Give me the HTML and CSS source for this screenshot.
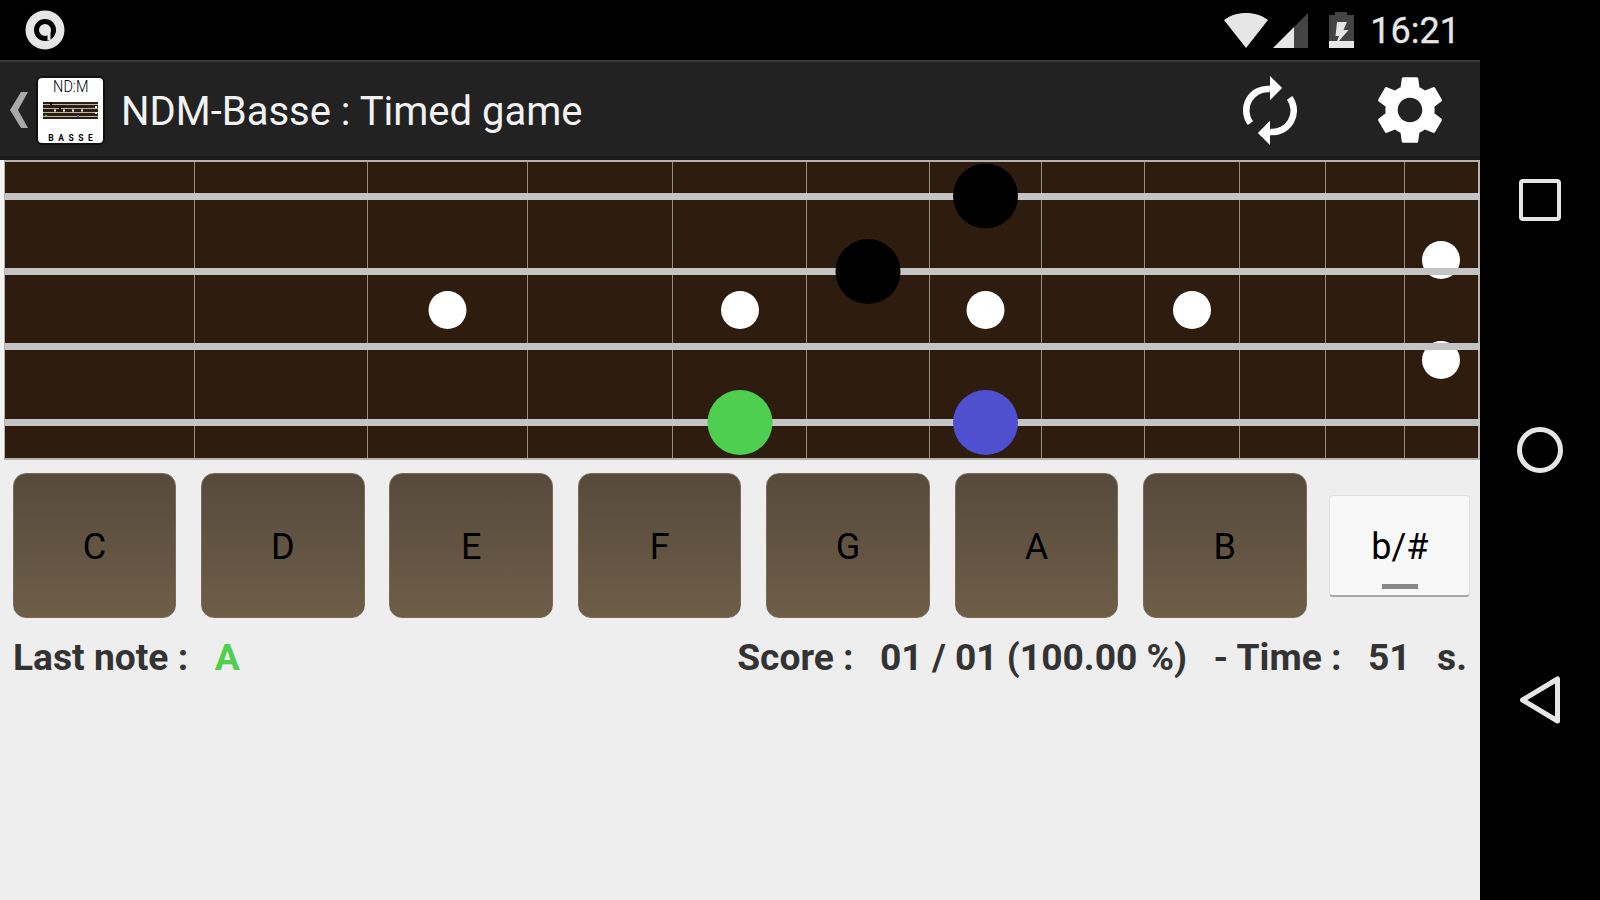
FILE: index.html
```html
<!DOCTYPE html>
<html lang="en">
<head>
  <meta charset="UTF-8">
  <title>NDM-Basse : Timed game</title>
  <link rel="stylesheet" href="styles.css">
</head>
<body>
  <div class="screen">
    <div class="status-bar">
      <svg class="status-logo" viewBox="0 0 40 40" width="40" height="40">
        <circle cx="20" cy="20" r="19.500" fill="#e6e6e6"/>
        <circle cx="20" cy="20" r="8.500" fill="none" stroke="#000" stroke-width="5"/>
        <rect x="22.500" y="20" width="3" height="10" fill="#e6e6e6"/>
      </svg>
      <div class="status-right">
        <svg viewBox="0 0 44 35" width="44" height="35" class="wifi">
          <path fill="#e6e6e6" d="M22 35L0 7C6 2.500 13.500 0 22 0S38 2.500 44 7Z"/>
        </svg>
        <svg viewBox="0 0 35 35" width="35" height="35" class="signal">
          <path fill="#444" d="M21 14L35 0V35H21Z"/>
          <path fill="#e6e6e6" d="M21 14V35H0Z"/>
        </svg>
        <svg viewBox="0 0 25 36" width="25" height="36" class="battery">
          <path fill="#444" d="M6 0H18V3H25V29H0V3H6Z"/>
          <path fill="#e6e6e6" d="M0 29H25V36H0Z"/>
          <path fill="#e6e6e6" d="M8 10H18L14.500 18H19.500L6.500 33L10 24H6.500Z"/>
        </svg>
        <span class="clock">16:21</span>
      </div>
    </div>

    <div class="action-bar">
      <svg class="back" viewBox="0 0 18 36" width="18" height="36">
        <path fill="#a9a9a9" d="M18 0H11L0 18L11 36H18L8 18Z"/>
      </svg>
      <div class="app-icon">
        <span class="app-ndm">ND:M</span>
        <svg viewBox="0 0 55 17" width="55" height="17" class="app-board">
          <rect width="55" height="17" fill="#2e1c0f"/>
          <rect y="2" width="55" height="1" fill="#b9b3a8"/>
          <rect y="6" width="55" height="1" fill="#b9b3a8"/>
          <rect y="10" width="55" height="1" fill="#b9b3a8"/>
          <rect y="14" width="55" height="1" fill="#b9b3a8"/>
          <rect x="7" y="1" width="2" height="2" fill="#000"/>
          <rect x="16" y="5" width="2" height="2" fill="#000"/>
          <rect x="11" y="7.500" width="2" height="2" fill="#fff"/>
          <rect x="20" y="7.500" width="2" height="2" fill="#fff"/>
          <rect x="29" y="7.500" width="2" height="2" fill="#fff"/>
          <rect x="38" y="7.500" width="2" height="2" fill="#fff"/>
          <rect x="52" y="4" width="2" height="2" fill="#fff"/>
          <rect x="52" y="10" width="2" height="2" fill="#fff"/>
          <rect x="2" y="13" width="2" height="2" fill="#4fcf50"/>
          <rect x="34" y="13" width="2" height="2" fill="#4f50cf"/>
        </svg>
        <span class="app-basse">BASSE</span>
      </div>
      <span class="title">NDM-Basse : Timed game</span>
      <svg class="refresh" viewBox="-30 -40 60 80" width="56" height="75">
        <g>
          <path d="M-21 13.500A23 23 0 0 1 0 -23" fill="none" stroke="#fff" stroke-width="7"/>
          <path d="M0 -37L13 -24L0 -11Z" fill="#fff"/>
        </g>
        <g transform="rotate(180)">
          <path d="M-21 13.500A23 23 0 0 1 0 -23" fill="none" stroke="#fff" stroke-width="7"/>
          <path d="M0 -37L13 -24L0 -11Z" fill="#fff"/>
        </g>
      </svg>
      <svg class="gear" viewBox="0 0 24 24" width="82" height="82">
        <path fill="#fff" d="M19.140 12.940c.04-.3.06-.61.06-.94 0-.32-.02-.64-.07-.94l2.030-1.580c.18-.14.23-.41.12-.61l-1.920-3.320c-.12-.22-.37-.29-.59-.22l-2.390.96c-.5-.38-1.030-.7-1.620-.94l-.36-2.540c-.04-.24-.24-.41-.48-.41h-3.840c-.24 0-.43.17-.47.41l-.36 2.540c-.59.24-1.130.57-1.620.94l-2.390-.96c-.22-.08-.47 0-.59.22L2.740 8.870c-.12.21-.08.47.12.61l2.030 1.580c-.05.3-.09.63-.09.94s.02.64.07.94l-2.030 1.580c-.18.14-.23.41-.12.61l1.920 3.320c.12.22.37.29.59.22l2.390-.96c.5.38 1.030.7 1.620.94l.36 2.540c.05.24.24.41.48.41h3.840c.24 0 .44-.17.47-.41l.36-2.540c.59-.24 1.130-.56 1.620-.94l2.390.96c.22.08.47 0 .59-.22l1.920-3.320c.12-.22.07-.47-.12-.61l-2.010-1.580zM12 15.600c-1.980 0-3.600-1.620-3.600-3.600s1.620-3.600 3.600-3.600 3.600 1.620 3.600 3.600-1.620 3.600-3.600 3.600z"/>
      </svg>
    </div>

    <!-- fretboard is drawn in page coordinates to keep the numbers readable -->
    <svg class="fretboard" viewBox="0 160 1480 300" width="1480" height="300">
      <rect x="0" y="160" width="4" height="300" fill="#f4f4f4"/>
      <rect x="4" y="160" width="1476" height="300" fill="#b5b1ab"/>
      <rect x="5" y="162" width="1473" height="296" fill="#2e1c0f"/>
      <g fill="#968e83">
        <rect x="194" y="162" width="1" height="296"/>
        <rect x="367" y="162" width="1" height="296"/>
        <rect x="527" y="162" width="1" height="296"/>
        <rect x="672" y="162" width="1" height="296"/>
        <rect x="806" y="162" width="1" height="296"/>
        <rect x="929" y="162" width="1" height="296"/>
        <rect x="1041" y="162" width="1" height="296"/>
        <rect x="1144" y="162" width="1" height="296"/>
        <rect x="1239" y="162" width="1" height="296"/>
        <rect x="1325" y="162" width="1" height="296"/>
        <rect x="1404" y="162" width="1" height="296"/>
      </g>
      <g fill="#fff">
        <circle cx="447.500" cy="310" r="19"/>
        <circle cx="740" cy="310" r="19"/>
        <circle cx="985.500" cy="310" r="19"/>
        <circle cx="1192" cy="310" r="19"/>
        <circle cx="1441" cy="260" r="19"/>
        <circle cx="1441" cy="360" r="19"/>
      </g>
      <g fill="#c4c4c4">
        <rect x="5" y="193" width="1475" height="7"/>
        <rect x="5" y="268" width="1475" height="7"/>
        <rect x="5" y="343" width="1475" height="7"/>
        <rect x="5" y="419" width="1475" height="7"/>
      </g>
      <circle cx="985.500" cy="196" r="32.500" fill="#000"/>
      <circle cx="868" cy="271.500" r="32.500" fill="#000"/>
      <circle cx="740" cy="422.500" r="32.500" fill="#4fcf50"/>
      <circle cx="985.500" cy="422.500" r="32.500" fill="#4f50cf"/>
    </svg>

    <div class="keys">
      <button class="key">C</button>
      <button class="key">D</button>
      <button class="key">E</button>
      <button class="key">F</button>
      <button class="key">G</button>
      <button class="key">A</button>
      <button class="key">B</button>
      <button class="sharp">b/#<span class="sharp-bar"></span></button>
    </div>

    <div class="info">
      <div class="info-group">
        <span>Last note :</span>
        <span class="last-note">A</span>
      </div>
      <div class="info-group">
        <span>Score :</span>
        <span>01 / 01 (100.00 %)</span>
        <span>- Time :</span>
        <span>51</span>
        <span>s.</span>
      </div>
    </div>
  </div>

  <div class="nav-bar">
    <div class="nav-item">
      <svg viewBox="0 0 42 42" width="42" height="42">
        <rect x="2" y="2" width="38" height="38" rx="2" fill="none" stroke="#e6e6e6" stroke-width="4"/>
      </svg>
    </div>
    <div class="nav-item">
      <svg viewBox="0 0 46 46" width="46" height="46">
        <circle cx="23" cy="23" r="20.500" fill="none" stroke="#e6e6e6" stroke-width="5"/>
      </svg>
    </div>
    <div class="nav-item">
      <svg viewBox="0 0 42 48" width="42" height="48">
        <path d="M38.500 3V45L3.500 24Z" fill="none" stroke="#e6e6e6" stroke-width="5" stroke-linejoin="round"/>
      </svg>
    </div>
  </div>
</body>
</html>
```

FILE: styles.css
```css
body {
  margin: 0;
  width: 1600px;
  height: 900px;
  display: flex;
  overflow: hidden;
  background: #000;
  font-family: Roboto, "Liberation Sans", sans-serif;
}
.screen {
  width: 1480px;
  height: 900px;
  background: #eee;
}
.status-bar {
  height: 60px;
  background: #000;
  display: flex;
  align-items: center;
  justify-content: space-between;
  padding: 0 20px 0 25px;
  box-sizing: border-box;
}
.status-logo {
  margin-top: -1px;
}
.status-right {
  display: flex;
  align-items: center;
}
.wifi {
  margin-right: 5px;
}
.signal {
  margin-right: 21px;
}
.battery {
  margin-right: 16px;
}
.clock {
  color: #e6e6e6;
  font-size: 36px;
  padding-top: 2px;
  -webkit-text-stroke: 0.3px #e6e6e6;
}
.action-bar {
  height: 100px;
  box-sizing: border-box;
  background: #222;
  border-top: 2px solid #3a3a3a;
  border-bottom: 4px solid #1b1b1b;
  padding-top: 2px;
  display: flex;
  align-items: center;
}
.back {
  margin-left: 10px;
}
.app-icon {
  width: 69px;
  height: 69px;
  box-sizing: border-box;
  margin-left: 8px;
  background: #fff;
  border: 2px solid #111;
  border-radius: 6px;
  display: flex;
  flex-direction: column;
  align-items: center;
  color: #000;
}
.app-ndm {
  font-size: 17px;
  font-weight: 300;
  line-height: 14px;
  margin-top: 1px;
  transform: scaleX(0.85);
}
.app-board {
  margin-top: 9px;
}
.app-basse {
  font-size: 8.500px;
  font-weight: 700;
  letter-spacing: 4.500px;
  line-height: 10px;
  margin-top: 14px;
  margin-right: -4.500px;
}
.title {
  color: #f2f2f2;
  font-size: 40px;
  margin-left: 16px;
  padding-top: 2px;
  flex: 1;
}
.refresh {
  margin-right: 71px;
}
.gear {
  margin-right: 29px;
}
.fretboard {
  display: block;
}
.keys {
  display: flex;
  align-items: center;
  gap: 24.800px;
  height: 145px;
  margin-top: 12.500px;
  padding-left: 12.700px;
}
.key {
  width: 163.600px;
  height: 145px;
  padding: 3px 0 0;
  font-family: inherit;
  font-size: 36px;
  color: #000;
  border: 1px solid #786b57;
  border-radius: 13px;
  background: linear-gradient(180deg, #574a3c, #6e5e48);
}
.sharp {
  width: 141px;
  height: 102px;
  margin-left: -2px;
  margin-top: 1px;
  padding: 3px 0 0;
  position: relative;
  font-family: inherit;
  font-size: 36px;
  color: #000;
  background: #f8f8f8;
  border: 1px solid #e0e0e0;
  border-bottom: 2px solid #a8a8a8;
  border-radius: 4px;
}
.sharp-bar {
  position: absolute;
  left: 52px;
  bottom: 6px;
  width: 36px;
  height: 5px;
  background: #888;
}
.info {
  display: flex;
  justify-content: space-between;
  padding: 0 13px;
  margin-top: 16px;
  font-size: 37.200px;
  font-weight: 700;
  line-height: 46px;
  color: #333;
}
.info-group {
  display: flex;
  gap: 26.500px;
}
.last-note {
  color: #4fcf50;
}
.nav-bar {
  width: 120px;
  height: 900px;
  box-sizing: border-box;
  padding: 75px 0;
  display: flex;
  flex-direction: column;
}
.nav-item {
  flex: 1;
  display: flex;
  align-items: center;
  justify-content: center;
}
```
